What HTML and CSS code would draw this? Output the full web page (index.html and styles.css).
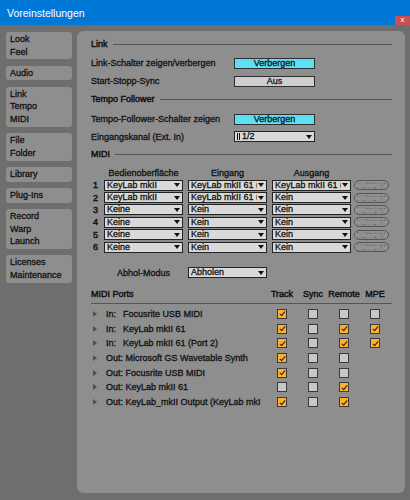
FILE: index.html
```html
<!DOCTYPE html>
<html>
<head>
	<link rel="stylesheet" href="styles.css">
</head>

<body>

	<div class="titlebar">
		<span class="title">Voreinstellungen</span>
		<span class="close">x</span>
	</div>

	<div class="main">
		<nav class="tabs">
			<div class="tab">Look<br>Feel</div>
			<div class="tab">Audio</div>
			<div class="tab">Link<br>Tempo<br>MIDI</div>
			<div class="tab">File<br>Folder</div>
			<div class="tab">Library</div>
			<div class="tab">Plug-Ins</div>
			<div class="tab">Record<br>Warp<br>Launch</div>
			<div class="tab">Licenses<br>Maintenance</div>
		</nav>

		<div class="panel">
			<div class="hdr"><span>Link</span></div>
			<div class="row first">
				<span class="label">Link-Schalter zeigen/verbergen</span>
				<span class="btn on">Verbergen</span>
			</div>
			<div class="row">
				<span class="label">Start-Stopp-Sync</span>
				<span class="btn">Aus</span>
			</div>

			<div class="hdr"><span>Tempo Follower</span></div>
			<div class="row second">
				<span class="label">Tempo-Follower-Schalter zeigen</span>
				<span class="btn on">Verbergen</span>
			</div>
			<div class="row short">
				<span class="label">Eingangskanal (Ext. In)</span>
				<span class="dd wide"><span class="txt"><span class="stereo"></span>1/2</span></span>
			</div>

			<div class="hdr"><span>MIDI</span></div>
			<div class="midi-head">
				<span></span>
				<span class="colname">Bedienoberfläche</span>
				<span class="colname">Eingang</span>
				<span class="colname">Ausgang</span>
			</div>
			<div class="mrow">
				<span class="num">1</span>
				<span class="dd"><span class="txt">KeyLab mkII</span></span>
				<span class="dd"><span class="txt">KeyLab mkII 61 (Port 2)</span></span>
				<span class="dd"><span class="txt">KeyLab mkII 61 (Port 2)</span></span>
				<span class="dump">Dumper</span>
			</div>
			<div class="mrow">
				<span class="num">2</span>
				<span class="dd"><span class="txt">KeyLab mkII</span></span>
				<span class="dd"><span class="txt">KeyLab mkII 61 (Port 2)</span></span>
				<span class="dd"><span class="txt">Kein</span></span>
				<span class="dump">Dumper</span>
			</div>
			<div class="mrow">
				<span class="num">3</span>
				<span class="dd"><span class="txt">Keine</span></span>
				<span class="dd"><span class="txt">Kein</span></span>
				<span class="dd"><span class="txt">Kein</span></span>
				<span class="dump">Dumper</span>
			</div>
			<div class="mrow">
				<span class="num">4</span>
				<span class="dd"><span class="txt">Keine</span></span>
				<span class="dd"><span class="txt">Kein</span></span>
				<span class="dd"><span class="txt">Kein</span></span>
				<span class="dump">Dumper</span>
			</div>
			<div class="mrow">
				<span class="num">5</span>
				<span class="dd"><span class="txt">Keine</span></span>
				<span class="dd"><span class="txt">Kein</span></span>
				<span class="dd"><span class="txt">Kein</span></span>
				<span class="dump">Dumper</span>
			</div>
			<div class="mrow">
				<span class="num">6</span>
				<span class="dd"><span class="txt">Keine</span></span>
				<span class="dd"><span class="txt">Kein</span></span>
				<span class="dd"><span class="txt">Kein</span></span>
				<span class="dump">Dumper</span>
			</div>

			<div class="mrow pickup">
				<span></span>
				<span class="colname">Abhol-Modus</span>
				<span class="dd"><span class="txt">Abholen</span></span>
			</div>

			<div class="ports-head">
				<span class="pname">MIDI Ports</span>
				<span class="cell">Track</span>
				<span class="cell">Sync</span>
				<span class="cell">Remote</span>
				<span class="cell">MPE</span>
			</div>
			<div class="ports">
				<div class="port">
					<span class="pname"><span class="tri"></span><span class="io">In:</span>Focusrite USB MIDI</span>
					<span class="cell"><span class="cb on"></span></span>
					<span class="cell"><span class="cb"></span></span>
					<span class="cell"><span class="cb"></span></span>
					<span class="cell"><span class="cb"></span></span>
				</div>
				<div class="port">
					<span class="pname"><span class="tri"></span><span class="io">In:</span>KeyLab mkII 61</span>
					<span class="cell"><span class="cb on"></span></span>
					<span class="cell"><span class="cb"></span></span>
					<span class="cell"><span class="cb on"></span></span>
					<span class="cell"><span class="cb on"></span></span>
				</div>
				<div class="port">
					<span class="pname"><span class="tri"></span><span class="io">In:</span>KeyLab mkII 61 (Port 2)</span>
					<span class="cell"><span class="cb on"></span></span>
					<span class="cell"><span class="cb"></span></span>
					<span class="cell"><span class="cb on"></span></span>
					<span class="cell"><span class="cb on"></span></span>
				</div>
				<div class="port">
					<span class="pname"><span class="tri"></span>Out: Microsoft GS Wavetable Synth</span>
					<span class="cell"><span class="cb on"></span></span>
					<span class="cell"><span class="cb"></span></span>
					<span class="cell"><span class="cb"></span></span>
				</div>
				<div class="port">
					<span class="pname"><span class="tri"></span>Out: Focusrite USB MIDI</span>
					<span class="cell"><span class="cb on"></span></span>
					<span class="cell"><span class="cb"></span></span>
					<span class="cell"><span class="cb"></span></span>
				</div>
				<div class="port">
					<span class="pname"><span class="tri"></span>Out: KeyLab mkII 61</span>
					<span class="cell"><span class="cb"></span></span>
					<span class="cell"><span class="cb"></span></span>
					<span class="cell"><span class="cb on"></span></span>
				</div>
				<div class="port">
					<span class="pname"><span class="tri"></span>Out: KeyLab_mkII Output (KeyLab mkI</span>
					<span class="cell"><span class="cb on"></span></span>
					<span class="cell"><span class="cb"></span></span>
					<span class="cell"><span class="cb on"></span></span>
				</div>
			</div>
		</div>
	</div>

</body>
</html>
```

FILE: styles.css
```css
body {
	margin:0;
	background-color:#6e6e6e;
	font-family:"Liberation Sans", Arial, sans-serif;
	font-size:9px;
	color:#111;
	-webkit-text-stroke:0.3px #111;
}
.titlebar {
	height:25px;
	background-color:#0078d7;
	color:white;
	display:flex;
	align-items:center;
	justify-content:space-between;
	padding-left:7px;
	-webkit-text-stroke:0;
}
.title {
	font-size:10.5px;
}
.close {
	align-self:flex-end;
	width:15px;
	height:9px;
	background-color:#c75050;
	font-size:8px;
	line-height:8px;
	text-align:center;
}
.main {
	display:flex;
	height:475px;
	box-sizing:border-box;
	padding:6px 5px 7px 6px;
}

/* left column */
.tabs {
	width:66px;
	display:flex;
	flex-direction:column;
	gap:6.3px;
	padding-top:1px;
}
.tab {
	background-color:#8e8e8e;
	border-radius:3px;
	padding:1px 4px;
	line-height:12.7px;
}

/* right panel */
.panel {
	flex:1;
	margin-left:5px;
	background-color:#8e8e8e;
	border-radius:6px;
	padding:4px 13px 0 14px;
}
.hdr {
	height:18px;
	display:flex;
	align-items:center;
	gap:5px;
	-webkit-text-stroke:0.45px #111;
}
.hdr::after {
	content:"";
	flex:1;
	height:1px;
	background-color:#545454;
}
.row {
	height:18px;
	display:flex;
	align-items:center;
}
.row.first {
	margin-top:1px;
}
.row.second {
	margin-top:2px;
}
.row.short {
	height:17px;
}
.label {
	width:143px;
}
.btn {
	width:81px;
	height:11px;
	box-sizing:border-box;
	border:1px solid #2e2e2e;
	background-color:#cecece;
	text-align:center;
	line-height:9px;
}
.btn.on {
	background-color:#5ddff4;
}

/* dropdowns */
.dd {
	height:11px;
	box-sizing:border-box;
	border:1px solid #232323;
	background-color:#d9d9d9;
	display:flex;
	align-items:center;
	padding-left:2px;
	overflow:hidden;
}
.dd.wide {
	width:81px;
}
.dd .txt {
	flex:1;
	overflow:hidden;
	white-space:nowrap;
	line-height:9px;
	display:flex;
	align-items:center;
}
.dd::after {
	content:"";
	border-left:3px solid transparent;
	border-right:3px solid transparent;
	border-top:4px solid #111;
	margin:0 2px 0 1px;
}
.stereo {
	width:1px;
	height:7px;
	border-left:1.5px solid #111;
	border-right:1.5px solid #111;
	margin-right:2px;
}

/* midi table */
.midi-head, .mrow {
	display:grid;
	grid-template-columns:8px 79px 79px 79px 33px;
	column-gap:5px;
	align-items:center;
}
.midi-head {
	height:13px;
	margin-top:3px;
}
.colname {
	text-align:center;
}
.mrow {
	height:12.4px;
}
.mrow.pickup {
	height:12px;
	margin-top:13.6px;
}
.num {
	padding-left:2px;
	-webkit-text-stroke:0.45px #111;
}
.dump {
	height:10px;
	margin-left:-2px;
	box-sizing:border-box;
	border:1px solid #555;
	border-radius:5px;
	background-color:#929292;
	color:#d2d2d2;
	-webkit-text-stroke:0.3px #505050;
	overflow:hidden;
	white-space:nowrap;
	line-height:8px;
	text-indent:-1px;
}

/* ports */
.ports-head {
	display:flex;
	align-items:center;
	height:12px;
	margin-top:9px;
	padding-bottom:3px;
	border-bottom:1px solid #555;
	-webkit-text-stroke:0.45px #111;
}
.ports {
	margin-top:2.7px;
}
.port {
	display:flex;
	align-items:center;
	height:14.7px;
}
.pname {
	width:175.5px;
	display:flex;
	align-items:center;
	white-space:nowrap;
}
.tri {
	border-left:4px solid #4e4e4e;
	border-top:3px solid transparent;
	border-bottom:3px solid transparent;
	margin:0 9px 0 2px;
}
.io {
	width:17px;
}
.cell {
	width:31px;
	display:flex;
	justify-content:center;
}
.cb {
	width:10px;
	height:10px;
	box-sizing:border-box;
	border:1px solid #3a3a3a;
	background-color:#c8c8c8;
	display:flex;
	justify-content:center;
}
.cb.on {
	background-color:#ffb02b;
}
.cb.on::after {
	content:"";
	width:2px;
	height:5px;
	margin-top:0.5px;
	border:solid #1e1e1e;
	border-width:0 1.3px 1.3px 0;
	transform:rotate(40deg);
}
```
